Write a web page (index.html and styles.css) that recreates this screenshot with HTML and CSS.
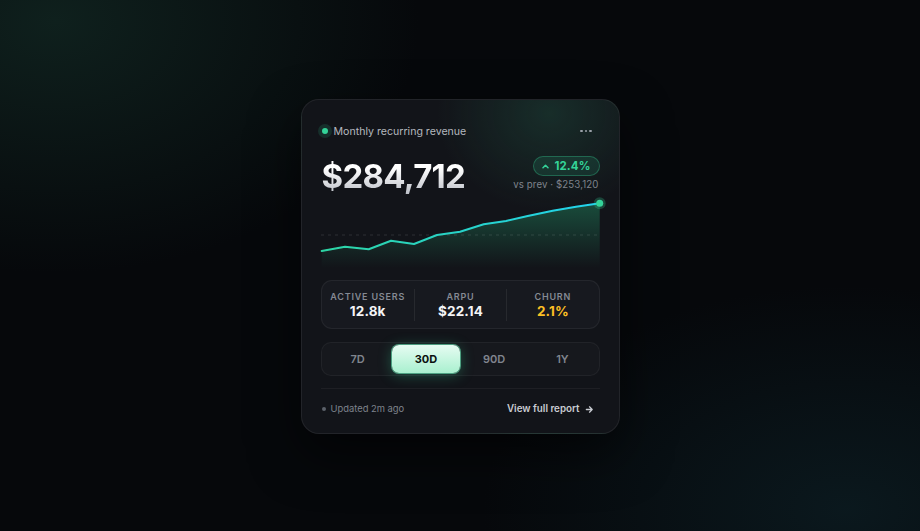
FILE: index.html
```html
<!DOCTYPE html>
<html>
<head>
<meta charset="utf-8">
<link rel="stylesheet" href="styles.css">
</head>
<body>
<div class="stage">
  <div class="card">
    <div class="head">
      <div class="title"><span class="live"></span>Monthly recurring revenue</div>
      <div class="menu"><i></i><i></i><i></i></div>
    </div>
    <div class="metric">
      <div class="value">$284,712</div>
      <div class="delta">
        <span class="badge"><svg width="7" height="7" viewBox="0 0 7 7"><path d="M1 4.8 L3.5 2.3 L6 4.8" fill="none" stroke="#34d399" stroke-width="1.5" stroke-linecap="round" stroke-linejoin="round"/></svg>12.4%</span>
        <span class="prev">vs prev · $253,120</span>
      </div>
    </div>
    <svg class="chart" width="280" height="71" viewBox="0 0 280 71">
      <defs>
        <linearGradient id="fill" x1="0" y1="0" x2="0" y2="1">
          <stop offset="0" stop-color="#1f7a58" stop-opacity="0.55"/>
          <stop offset="1" stop-color="#1f7a58" stop-opacity="0"/>
        </linearGradient>
        <linearGradient id="stroke" x1="0" y1="0" x2="1" y2="0">
          <stop offset="0" stop-color="#2dd4a4"/>
          <stop offset="1" stop-color="#22d3ee"/>
        </linearGradient>
      </defs>
      <path d="M0.7 54 L24 49.7 L47.7 52.3 L70 43.7 L93 47 L116 38 L139 34.7 L162.7 27.3 L185 24 L206.7 19 L231.7 13.7 L255 9.7 L278.7 6.3 L278.7 71 L0.7 71 Z" fill="url(#fill)"/>
      <line x1="0" y1="38" x2="279" y2="38" stroke="#ffffff" stroke-opacity="0.12" stroke-dasharray="3 4" stroke-width="1"/>
      <path d="M0.7 54 L24 49.7 L47.7 52.3 L70 43.7 L93 47 L116 38 L139 34.7 L162.7 27.3 L185 24 L206.7 19 L231.7 13.7 L255 9.7 L278.7 6.3" fill="none" stroke="url(#stroke)" stroke-width="2" stroke-linejoin="round" stroke-linecap="round"/>
      <circle cx="278.7" cy="6.3" r="6" fill="#34d399" fill-opacity="0.25"/>
      <circle cx="278.7" cy="6.3" r="3.5" fill="#34d399"/>
    </svg>
    <div class="stats">
      <div class="stat"><span class="label">Active users</span><span class="num">12.8k</span></div>
      <div class="stat"><span class="label">ARPU</span><span class="num">$22.14</span></div>
      <div class="stat"><span class="label">Churn</span><span class="num warn">2.1%</span></div>
    </div>
    <div class="seg">
      <span class="opt">7D</span>
      <span class="opt active">30D</span>
      <span class="opt">90D</span>
      <span class="opt">1Y</span>
    </div>
    <div class="foot">
      <span class="updated"><i></i>Updated 2m ago</span>
      <span class="link">View full report <svg width="9" height="9" viewBox="0 0 10 10"><path d="M1.5 5 H8 M5 2 L8 5 L5 8" fill="none" stroke="#c9ccd2" stroke-width="1.4" stroke-linecap="round" stroke-linejoin="round"/></svg></span>
    </div>
  </div>
</div>
</body>
</html>
```
FILE: styles.css
```css
* { box-sizing: border-box; }
html, body { margin: 0; height: 100%; }
body {
  font-family: Inter, "Noto Sans", sans-serif;
  background:
    radial-gradient(ellipse 520px 360px at 6% 4%, rgba(22, 52, 44, 0.55), transparent 70%),
    radial-gradient(ellipse 520px 320px at 92% 96%, rgba(16, 44, 52, 0.45), transparent 70%),
    #06080b;
  color: #e8eaed;
}
.stage {
  width: 920px;
  height: 531px;
  display: flex;
  justify-content: center;
  padding-top: 99px;
}
.card {
  width: 319px;
  height: 335px;
  border-radius: 18px;
  border: 1px solid rgba(255, 255, 255, 0.07);
  background:
    radial-gradient(ellipse 150px 130px at 78% 4%, rgba(38, 110, 84, 0.28), transparent 75%),
    #121419;
  box-shadow: 0 20px 50px rgba(0, 0, 0, 0.55);
  padding: 19px 19px 0 19px;
  display: flex;
  flex-direction: column;
}
.head {
  height: 24px;
  display: flex;
  align-items: center;
  justify-content: space-between;
}
.title {
  display: flex;
  align-items: center;
  font-size: 10.6px;
  color: #b4b8bf;
  font-weight: 400;
}
.live {
  width: 6px;
  height: 6px;
  border-radius: 50%;
  background: #34d399;
  box-shadow: 0 0 0 4px rgba(52, 211, 153, 0.14);
  margin: 0 6px 0 1px;
}
.menu {
  display: flex;
  gap: 2px;
  margin-right: 8px;
}
.menu i {
  width: 2.5px;
  height: 2.5px;
  border-radius: 50%;
  background: #9aa0a8;
}
.metric {
  margin-top: 12px;
  display: flex;
  justify-content: space-between;
  align-items: flex-start;
}
.value {
  font-size: 33px;
  font-weight: 700;
  letter-spacing: -0.022em;
  line-height: 40px;
  margin-left: 1px;
  margin-top: 1px;
  background: linear-gradient(180deg, #ffffff 30%, #b8bcc4 100%);
  -webkit-background-clip: text;
  background-clip: text;
  color: transparent;
}
.delta {
  display: flex;
  flex-direction: column;
  align-items: flex-end;
  gap: 3px;
  margin-top: 1px;
}
.badge {
  height: 20px;
  padding: 0 8px 0 8px;
  display: flex;
  align-items: center;
  gap: 5px;
  border-radius: 10px;
  background: rgba(52, 211, 153, 0.12);
  border: 1px solid rgba(52, 211, 153, 0.32);
  color: #34d399;
  font-size: 11.5px;
  font-weight: 700;
  letter-spacing: 0.01em;
}
.prev {
  font-size: 9.7px;
  color: #7e838c;
  letter-spacing: 0.01em;
  margin-right: 1px;
}
.chart {
  display: block;
  margin-top: 1px;
  overflow: visible;
}
.stats {
  margin-top: 12px;
  height: 49px;
  border-radius: 11px;
  background: #17191f;
  border: 1px solid rgba(255, 255, 255, 0.06);
  display: grid;
  grid-template-columns: 1fr 1fr 1fr;
  align-items: center;
}
.stat {
  display: flex;
  flex-direction: column;
  align-items: center;
  gap: 1px;
  border-left: 1px solid rgba(255, 255, 255, 0.07);
  padding: 2px 0;
}
.stat:first-child { border-left: none; }
.label {
  font-size: 9px;
  font-weight: 600;
  text-transform: uppercase;
  letter-spacing: 0.09em;
  color: #858a93;
}
.num {
  font-size: 13.5px;
  font-weight: 700;
  color: #f3f4f6;
  letter-spacing: 0.01em;
}
.num.warn { color: #fbbf24; }
.seg {
  margin-top: 13px;
  height: 34px;
  border-radius: 10px;
  background: #16181d;
  border: 1px solid rgba(255, 255, 255, 0.05);
  padding: 2px;
  display: grid;
  grid-template-columns: repeat(4, 1fr);
}
.opt {
  display: flex;
  align-items: center;
  justify-content: center;
  font-size: 11px;
  font-weight: 600;
  color: #80858e;
  border-radius: 7px;
}
.opt.active {
  background: linear-gradient(180deg, #e6fcf2 0%, #a9f0cf 100%);
  color: #0b1110;
  font-weight: 700;
  box-shadow: 0 0 0 1px rgba(110, 231, 183, 0.6), 0 2px 14px rgba(52, 211, 153, 0.35);
}
.foot {
  margin-top: 12px;
  border-top: 1px solid rgba(255, 255, 255, 0.05);
  padding-top: 13px;
  display: flex;
  justify-content: space-between;
  align-items: center;
}
.updated {
  display: flex;
  align-items: center;
  font-size: 9.4px;
  color: #7e838c;
  line-height: 14px;
}
.updated i {
  width: 4px;
  height: 4px;
  border-radius: 50%;
  background: #5c616a;
  margin: 0 5px 0 1px;
}
.link {
  display: flex;
  align-items: center;
  gap: 5px;
  font-size: 9.8px;
  font-weight: 600;
  color: #c9ccd2;
  margin-right: 6px;
  line-height: 14px;
}
```
